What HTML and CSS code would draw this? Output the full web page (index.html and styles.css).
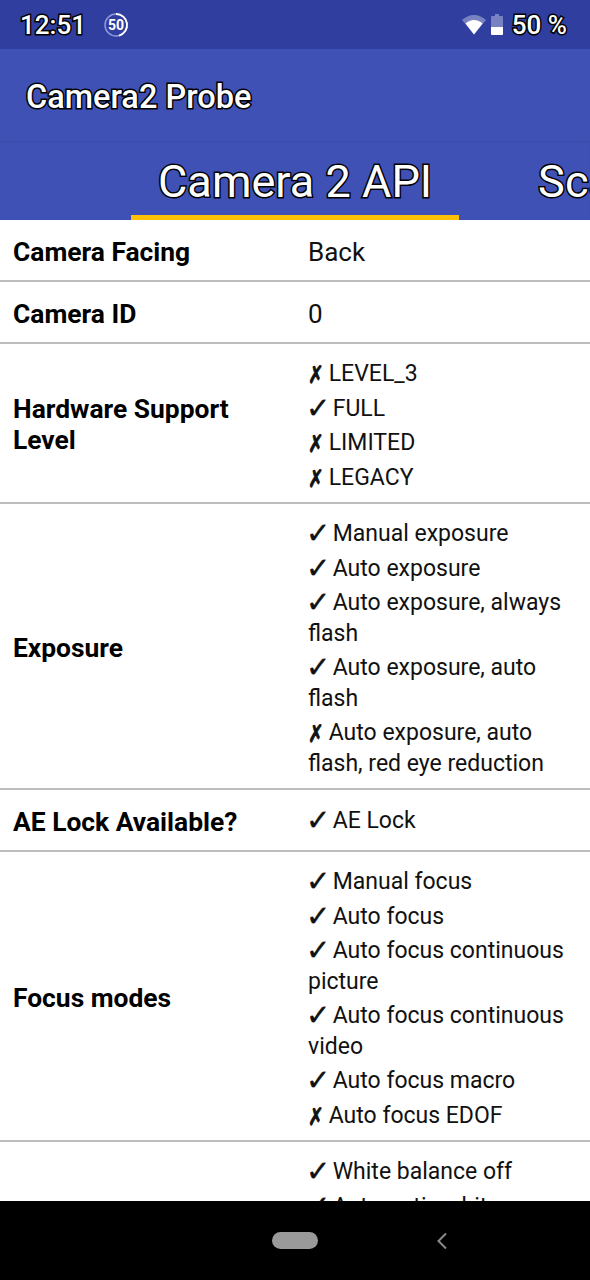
FILE: index.html
```html
<!DOCTYPE html>
<html lang="en">
<head>
  <meta charset="UTF-8">
  <title>Camera2 Probe</title>
  <link rel="stylesheet" href="styles.css">
</head>
<body>
  <div class="status-bar">
    <span class="outlined clock">12:51</span>
    <svg class="data-badge" width="26" height="26" viewBox="0 0 26 26" fill="none">
      <circle cx="13" cy="13" r="11" stroke="#8f9ad6" stroke-width="1.5"></circle>
      <path d="M13 2a11 11 0 0 1 3 21.600" stroke="#fff" stroke-width="1.8"></path>
      <text x="13" y="17.800" text-anchor="middle" class="badge-text">50</text>
    </svg>
    <span class="status-right">
      <svg class="wifi" width="24" height="20" viewBox="0 0 24 20">
        <path d="M0 5C3.300 2 7.500 0 12 0s8.700 2 12 5L12 19.500z" fill="#fff" opacity="0.35"></path>
        <path d="M3.500 8.500C5.800 6.300 8.800 5 12 5s6.200 1.300 8.500 3.500L12 19.500z" fill="#fff"></path>
      </svg>
      <svg class="battery-icon" width="12" height="21" viewBox="0 0 12 21">
        <path d="M4 0h4v2h3a1 1 0 0 1 1 1v17a1 1 0 0 1-1 1H1a1 1 0 0 1-1-1V3a1 1 0 0 1 1-1h3z" fill="#fff" opacity="0.35"></path>
        <path d="M0 13h12v7a1 1 0 0 1-1 1H1a1 1 0 0 1-1-1z" fill="#fff"></path>
      </svg>
      <span class="outlined battery">50 %</span>
    </span>
  </div>

  <div class="app-bar">
    <span class="outlined app-title">Camera2 Probe</span>
  </div>

  <div class="tabs">
    <div class="tab active"><span class="outlined">Camera 2 API</span></div>
    <div class="tab"><span class="outlined">Scaler</span></div>
  </div>

  <div class="content">
    <div class="row">
      <div class="label">Camera Facing</div>
      <div class="value plain">Back</div>
    </div>
    <div class="row">
      <div class="label">Camera ID</div>
      <div class="value plain">0</div>
    </div>
    <div class="row">
      <div class="label">Hardware Support Level</div>
      <div class="value">
        <div class="item"><span class="no">✗</span> LEVEL_3</div>
        <div class="item"><span class="yes">✓</span> FULL</div>
        <div class="item"><span class="no">✗</span> LIMITED</div>
        <div class="item"><span class="no">✗</span> LEGACY</div>
      </div>
    </div>
    <div class="row">
      <div class="label">Exposure</div>
      <div class="value">
        <div class="item"><span class="yes">✓</span> Manual exposure</div>
        <div class="item"><span class="yes">✓</span> Auto exposure</div>
        <div class="item"><span class="yes">✓</span> Auto exposure, always flash</div>
        <div class="item"><span class="yes">✓</span> Auto exposure, auto flash</div>
        <div class="item"><span class="no">✗</span> Auto exposure, auto flash, red eye reduction</div>
      </div>
    </div>
    <div class="row">
      <div class="label">AE Lock Available?</div>
      <div class="value">
        <div class="item"><span class="yes">✓</span> AE Lock</div>
      </div>
    </div>
    <div class="row">
      <div class="label">Focus modes</div>
      <div class="value">
        <div class="item"><span class="yes">✓</span> Manual focus</div>
        <div class="item"><span class="yes">✓</span> Auto focus</div>
        <div class="item"><span class="yes">✓</span> Auto focus continuous picture</div>
        <div class="item"><span class="yes">✓</span> Auto focus continuous video</div>
        <div class="item"><span class="yes">✓</span> Auto focus macro</div>
        <div class="item"><span class="no">✗</span> Auto focus EDOF</div>
      </div>
    </div>
    <div class="row">
      <div class="label"></div>
      <div class="value">
        <div class="item"><span class="yes">✓</span> White balance off</div>
        <div class="item"><span class="yes">✓</span> Automatic white balance</div>
      </div>
    </div>
  </div>

  <div class="nav-bar">
    <div class="home-pill"></div>
    <svg class="nav-back" width="12" height="18" viewBox="0 0 12 18" fill="none">
      <path d="M10 1.500L2.500 9l7.500 7.500" stroke="#8a8a8a" stroke-width="2"></path>
    </svg>
  </div>
</body>
</html>
```

FILE: styles.css
```css
body {
  margin: 0;
  width: 590px;
  height: 1280px;
  overflow: hidden;
  display: flex;
  flex-direction: column;
  font-family: Roboto, "Noto Sans", sans-serif;
  color: #111;
  background-color: #fff;
}
.outlined {
  color: #fff;
  -webkit-text-stroke: 3px #000;
  paint-order: stroke fill;
}
.status-bar {
  height: 49px;
  flex-shrink: 0;
  display: flex;
  align-items: center;
  padding: 0 23px 0 20px;
  background-color: #303F9F;
}
.clock {
  font-size: 26px;
  font-weight: 500;
}
.data-badge {
  margin-left: 17px;
}
.badge-text {
  font-size: 14px;
  font-weight: 700;
  fill: #fff;
}
.status-right {
  margin-left: auto;
  display: flex;
  align-items: center;
}
.wifi {
  margin-right: 5px;
}
.battery-icon {
  margin-right: 9px;
}
.battery {
  font-size: 26px;
  font-weight: 500;
}
.app-bar {
  height: 92px;
  flex-shrink: 0;
  box-sizing: border-box;
  display: flex;
  align-items: center;
  padding: 3px 0 0 26px;
  background-color: #3F51B5;
}
.app-title {
  font-size: 32.500px;
  font-weight: 500;
}
.tabs {
  height: 79px;
  flex-shrink: 0;
  display: flex;
  overflow: hidden;
  padding-left: 131px;
  background-color: #3F51B5;
  box-shadow: inset 0 1px 1px rgba(0, 0, 0, 0.08);
}
.tab {
  flex-shrink: 0;
  padding: 14px 27px 0;
  font-size: 45.100px;
  box-sizing: border-box;
}
.tab + .tab {
  margin-left: 52px;
}
.tab.active {
  border-bottom: 5px solid #FFC107;
}
.content {
  flex: 1;
  overflow: hidden;
}
.row {
  display: flex;
  align-items: center;
  min-height: 62px;
  box-sizing: border-box;
  border-bottom: 2px solid #bdbdbd;
}
.label {
  width: 308px;
  box-sizing: border-box;
  flex-shrink: 0;
  padding: 4px 40px 0 13px;
  font-size: 26.400px;
  line-height: 31px;
  font-weight: 700;
  color: #000;
}
.value {
  flex: 1;
  padding: 11px 10px 9px 0;
  font-size: 23px;
  line-height: 30.500px;
}
.value.plain {
  padding-top: 15px;
  padding-bottom: 11px;
  font-size: 26px;
}
.item {
  padding-top: 4px;
}
.item:only-child {
  padding-top: 0;
}
/* marks are kept out of the line height, it is set by the text only */
.yes, .no {
  display: inline-block;
  font-family: "DejaVu Sans", sans-serif;
  font-weight: 700;
  line-height: 0;
  vertical-align: -2px;
}
.yes {
  width: 21px;
  margin-left: -2px;
  font-size: 29px;
  letter-spacing: -4px;
  -webkit-text-stroke: 0.4px #111;
}
.no {
  width: 15px;
  font-size: 24px;
  letter-spacing: -6px;
  -webkit-text-stroke: 0.9px #111;
  transform: scaleX(0.78);
  transform-origin: left center;
}
.nav-bar {
  height: 79px;
  flex-shrink: 0;
  position: relative;
  display: flex;
  align-items: center;
  justify-content: center;
  background-color: #000;
}
.home-pill {
  width: 46px;
  height: 17px;
  border-radius: 9px;
  background-color: #9a9a9a;
}
.nav-back {
  position: absolute;
  left: 436px;
  top: 31px;
}
```
